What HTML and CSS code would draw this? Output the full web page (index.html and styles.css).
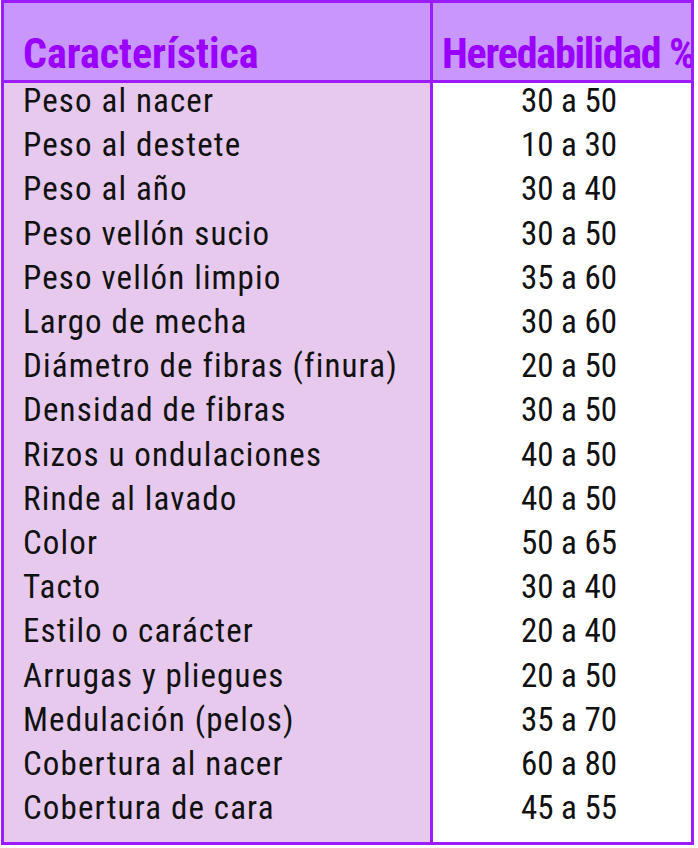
FILE: index.html
```html
<!DOCTYPE html>
<html lang="es">
<head>
<meta charset="utf-8">
<link rel="stylesheet" href="styles.css">
</head>
<body>
<div class="tabla">
  <div class="th th-car">Característica</div>
  <div class="th th-her">Heredabilidad %</div>
  <div class="body car">
    <div class="row">Peso al nacer</div>
    <div class="row">Peso al destete</div>
    <div class="row">Peso al año</div>
    <div class="row">Peso vellón sucio</div>
    <div class="row">Peso vellón limpio</div>
    <div class="row">Largo de mecha</div>
    <div class="row">Diámetro de fibras (finura)</div>
    <div class="row">Densidad de fibras</div>
    <div class="row">Rizos u ondulaciones</div>
    <div class="row">Rinde al lavado</div>
    <div class="row">Color</div>
    <div class="row">Tacto</div>
    <div class="row">Estilo o carácter</div>
    <div class="row">Arrugas y pliegues</div>
    <div class="row">Medulación (pelos)</div>
    <div class="row">Cobertura al nacer</div>
    <div class="row">Cobertura de cara</div>
  </div>
  <div class="body her">
    <div class="row">30 a 50</div>
    <div class="row">10 a 30</div>
    <div class="row">30 a 40</div>
    <div class="row">30 a 50</div>
    <div class="row">35 a 60</div>
    <div class="row">30 a 60</div>
    <div class="row">20 a 50</div>
    <div class="row">30 a 50</div>
    <div class="row">40 a 50</div>
    <div class="row">40 a 50</div>
    <div class="row">50 a 65</div>
    <div class="row">30 a 40</div>
    <div class="row">20 a 40</div>
    <div class="row">20 a 50</div>
    <div class="row">35 a 70</div>
    <div class="row">60 a 80</div>
    <div class="row">45 a 55</div>
  </div>
</div>
</body>
</html>
```

FILE: styles.css
```css
html, body {
  margin: 0;
  padding: 0;
  background: #ffffff;
}

body {
  font-family: "Roboto Condensed", Roboto, "Liberation Sans", sans-serif;
  color: #111111;
}

.tabla {
  display: grid;
  grid-template-columns: 426px 261px;
  width: max-content;
  margin-left: 1px;
  border: 3px solid #9d1cff;
}

.th {
  font-weight: 700;
  font-size: 42px;
  line-height: 1;
  color: #9a00ff;
  background: #c996fd;
  box-sizing: border-box;
  border-bottom: 3px solid #9d1cff;
  height: 80px;
  display: flex;
  align-items: flex-end;
  padding: 0 0 5px 19px;
  white-space: nowrap;
  overflow: hidden;
}

.th-her {
  border-left: 3px solid #9d1cff;
  padding-left: 9px;
  letter-spacing: -1.2px;
}

.body {
  padding-bottom: 8px;
}

.car {
  background: #e6c9ec;
  padding-left: 19px;
  letter-spacing: 1.15px;
}

.her {
  background: #ffffff;
  border-left: 3px solid #9d1cff;
  text-align: center;
  padding-left: 14px;
}

.row {
  font-size: 33px;
  line-height: 36.2px;
  padding-bottom: 8px;
  white-space: nowrap;
}
```
